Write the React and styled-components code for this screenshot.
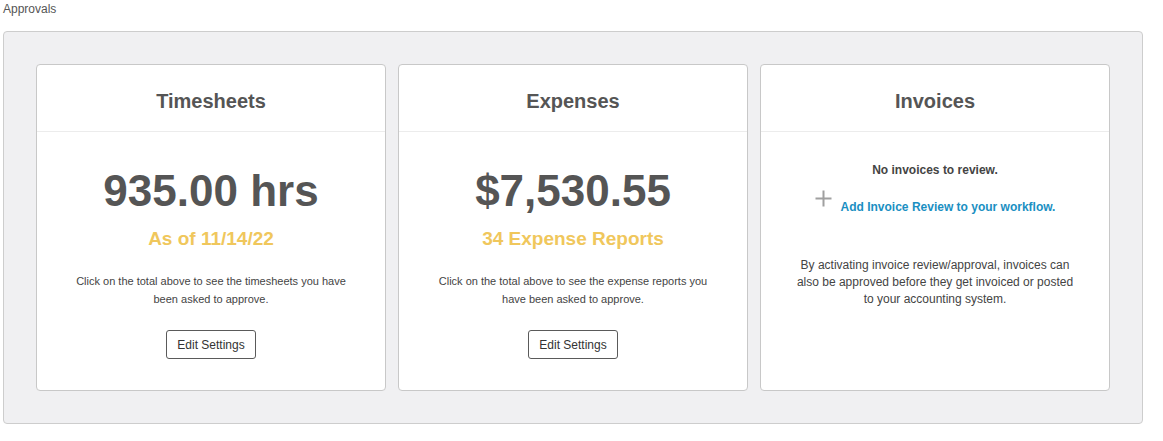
import React from "react";
import styled, { createGlobalStyle } from "styled-components";

const Global = createGlobalStyle`
  html, body { margin: 0; padding: 0; background: #ffffff; }
  body { font-family: "Liberation Sans", Arial, Helvetica, sans-serif; color: #444; }
  * { box-sizing: border-box; }
`;

const Page = styled.div`
  padding: 2px 0 0 3px;
`;

const PageLabel = styled.div`
  font-size: 12px;
  line-height: 14px;
  color: #555;
  margin-bottom: 15px;
`;

const Panel = styled.div`
  width: 1140px;
  background: #f0f0f2;
  border: 1px solid #cdcdcd;
  border-radius: 4px;
  padding: 32px;
  display: flex;
  gap: 12px;
`;

const Card = styled.div`
  flex: 1 1 0;
  background: #fff;
  border: 1px solid #c8c8c8;
  border-radius: 4px;
  display: flex;
  flex-direction: column;
`;

const CardHeader = styled.div`
  height: 67px;
  padding-top: 24px;
  border-bottom: 1px solid #ececec;
  text-align: center;
`;

const CardTitle = styled.h2`
  margin: 0;
  font-size: 20px;
  line-height: 24px;
  font-weight: 700;
  color: #555;
`;

const CardBody = styled.div`
  flex: 1;
  display: flex;
  flex-direction: column;
  align-items: center;
  text-align: center;
  padding: ${(p) => (p.$compact ? "30px 32px 31px" : "34px 32px 31px")};
`;

const Total = styled.a`
  font-size: 44px;
  line-height: 50px;
  font-weight: 700;
  color: #555;
  cursor: pointer;
  text-decoration: none;
`;

const Sub = styled.div`
  margin-top: 11px;
  font-size: 19px;
  line-height: 24px;
  font-weight: 700;
  color: #f0c75c;
`;

const Note = styled.p`
  margin: 21px 0 0;
  max-width: 284px;
  font-size: 11px;
  line-height: 18px;
  color: #444;
`;

const Button = styled.button`
  margin-top: 22px;
  height: 29px;
  padding: 0 10px;
  font-family: inherit;
  font-size: 12px;
  color: #333;
  background: #fff;
  border: 1px solid #5a5a5a;
  border-radius: 3px;
  cursor: pointer;
`;

const Empty = styled.div`
  font-size: 12px;
  line-height: 17px;
  font-weight: 700;
  color: #444;
`;

const LinkRow = styled.div`
  margin-top: 11px;
  display: flex;
  align-items: flex-start;
  gap: 9px;
`;

const PlusIcon = styled.svg`
  width: 17px;
  height: 17px;
  flex: none;
`;

const AddLink = styled.a`
  padding-top: 9px;
  font-size: 12px;
  line-height: 17px;
  font-weight: 700;
  color: #1b8fc2;
  text-decoration: none;
  cursor: pointer;
`;

const InvoiceNote = styled.p`
  margin: 41px 0 0;
  max-width: 284px;
  font-size: 12px;
  line-height: 17px;
  color: #444;
`;

const SummaryCard = ({ title, total, sub, note }) => (
  <Card>
    <CardHeader>
      <CardTitle>{title}</CardTitle>
    </CardHeader>
    <CardBody>
      <Total>{total}</Total>
      <Sub>{sub}</Sub>
      <Note>{note}</Note>
      <Button>Edit Settings</Button>
    </CardBody>
  </Card>
);

export default function App() {
  return (
    <>
      <Global />
      <Page>
        <PageLabel>Approvals</PageLabel>
        <Panel>
          <SummaryCard
            title="Timesheets"
            total="935.00 hrs"
            sub="As of 11/14/22"
            note="Click on the total above to see the timesheets you have been asked to approve."
          />
          <SummaryCard
            title="Expenses"
            total="$7,530.55"
            sub="34 Expense Reports"
            note="Click on the total above to see the expense reports you have been asked to approve."
          />
          <Card>
            <CardHeader>
              <CardTitle>Invoices</CardTitle>
            </CardHeader>
            <CardBody $compact>
              <Empty>No invoices to review.</Empty>
              <LinkRow>
                <PlusIcon viewBox="0 0 17 17">
                  <path d="M8.5 0.5v16M0.5 8.5h16" stroke="#a0a0a0" strokeWidth="2" fill="none" />
                </PlusIcon>
                <AddLink>Add Invoice Review to your workflow.</AddLink>
              </LinkRow>
              <InvoiceNote>
                By activating invoice review/approval, invoices can also be approved before they get
                invoiced or posted to your accounting system.
              </InvoiceNote>
            </CardBody>
          </Card>
        </Panel>
      </Page>
    </>
  );
}
